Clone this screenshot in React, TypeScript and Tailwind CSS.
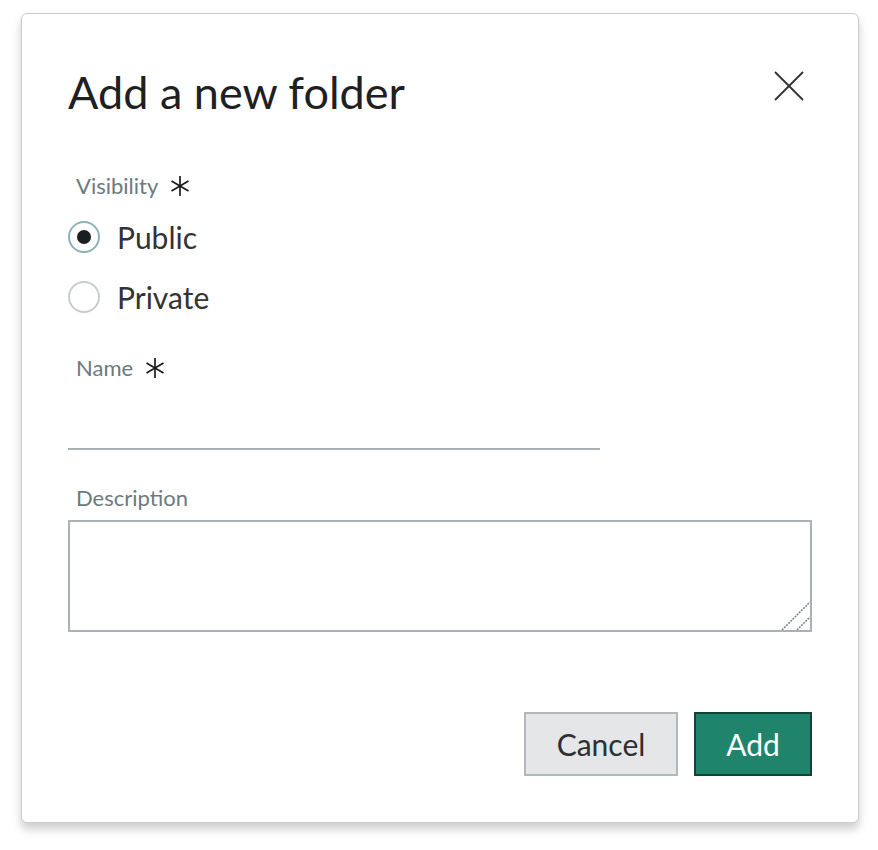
function Req() {
  return (
    <svg width="20" height="20" viewBox="0 0 20 20" className="mt-[1px]" aria-hidden>
      <g stroke="#1b1d1f" strokeWidth="1.7" strokeLinecap="butt">
        <line x1="10" y1="0" x2="10" y2="20" />
        <line x1="1.5" y1="5" x2="18.5" y2="15" />
        <line x1="1.5" y1="15" x2="18.5" y2="5" />
      </g>
    </svg>
  );
}

export default function App() {
  return (
    <div className="min-h-[850px] bg-white pt-[13px] pl-[21px]">
      <div
        className="w-[838px] h-[810px] bg-white rounded-[6px] border border-[#c9cdd0] shadow-[0_6px_10px_rgba(0,0,0,0.2)] pl-[46px] pr-[46px] pt-[60px] flex flex-col text-[#2d2f31]"
        style={{ fontFamily: '"Lato", "Open Sans", sans-serif' }}
      >
        <div className="flex items-center justify-between h-[36px]">
          <h1 className="text-[45px] leading-none text-[#1f2022]">Add a new folder</h1>
          <button className="mr-[8px] -mt-[12px]">
            <svg width="30" height="30" viewBox="0 0 30 30" aria-hidden>
              <g stroke="#2d2f31" strokeWidth="1.8">
                <line x1="1" y1="1" x2="29" y2="29" />
                <line x1="29" y1="1" x2="1" y2="29" />
              </g>
            </svg>
          </button>
        </div>

        <div className="mt-[61px] pl-[8px] flex items-center gap-[12px] text-[22px] text-[#6c7a80] h-[28px]">
          <span>Visibility</span>
          <Req />
        </div>

        <div className="mt-[22px] flex flex-col gap-[28px]">
          <label className="flex items-center gap-[17px] h-[32px]">
            <span className="w-[32px] h-[32px] rounded-full border-2 border-[#8fb1b8] flex items-center justify-center">
              <span className="w-[14px] h-[14px] rounded-full bg-[#1b1d1f]" />
            </span>
            <span className="text-[30px] text-[#333]">Public</span>
          </label>
          <label className="flex items-center gap-[17px] h-[32px]">
            <span className="w-[32px] h-[32px] rounded-full border-2 border-[#c8cccf]" />
            <span className="text-[30px] text-[#333]">Private</span>
          </label>
        </div>

        <div className="mt-[40px] pl-[8px] flex items-center gap-[12px] text-[22px] text-[#6c7a80] h-[28px]">
          <span>Name</span>
          <Req />
        </div>
        <div className="mt-[67px] w-[532px] border-b-2 border-[#aab1b4]" />

        <div className="mt-[33px] pl-[8px] text-[22px] text-[#6c7a80] h-[28px] flex items-center">Description</div>
        <div className="relative mt-[9px] w-[744px] h-[112px]">
          <textarea className="w-full h-full border-2 border-[#aab1b4] outline-none resize-none block" />
          <svg width="30" height="30" viewBox="0 0 30 30" className="absolute right-[2px] bottom-[2px]" aria-hidden>
            <g stroke="#7d8589" strokeWidth="1.6" strokeDasharray="2 1">
              <line x1="2" y1="30" x2="30" y2="2" />
              <line x1="17" y1="30" x2="30" y2="17" />
            </g>
          </svg>
        </div>

        <div className="mt-[80px] flex justify-end gap-[16px]">
          <button className="w-[154px] h-[64px] bg-[#e4e6e8] border-2 border-[#b2b7ba] text-[30px] text-[#2d2f31]">
            Cancel
          </button>
          <button className="w-[118px] h-[64px] bg-[#20846c] border-2 border-[#0e4536] text-[30px] text-white">
            Add
          </button>
        </div>
      </div>
    </div>
  );
}
